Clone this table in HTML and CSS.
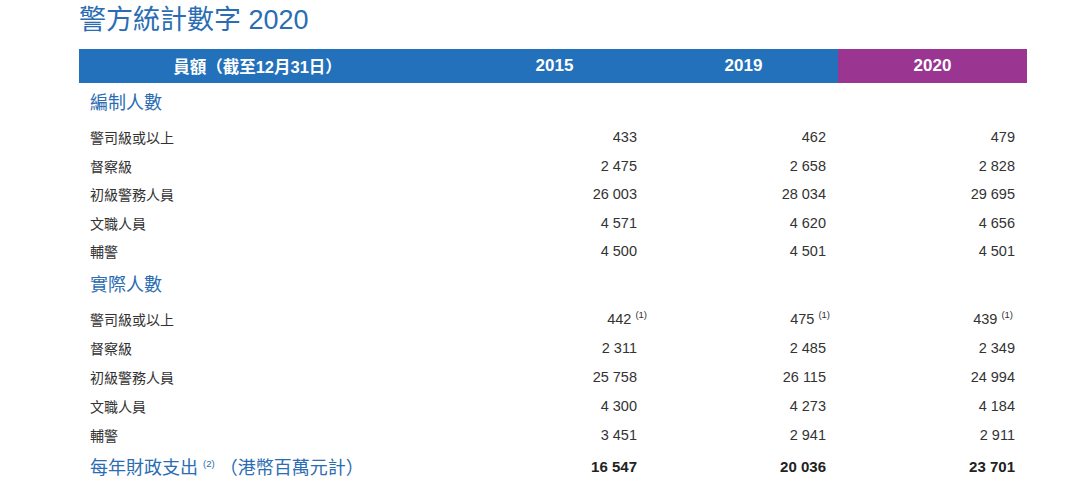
FILE: index.html
```html
<!DOCTYPE html>
<html lang="zh-Hant">
<head>
<meta charset="utf-8">
<title>警方統計數字 2020</title>
<link rel="stylesheet" href="styles.css">
</head>
<body>
<main class="page">
  <h1 class="title">警方統計數字 2020</h1>
  <div class="table">
    <div class="head">
      <div class="hcell hfirst">員額（截至12月31日）</div>
      <div class="hcell">2015</div>
      <div class="hcell">2019</div>
      <div class="hcell hl">2020</div>
    </div>

    <div class="section">編制人數</div>
    <div class="row"><div class="lab">警司級或以上</div><div class="num">433</div><div class="num">462</div><div class="num">479</div></div>
    <div class="row"><div class="lab">督察級</div><div class="num">2 475</div><div class="num">2 658</div><div class="num">2 828</div></div>
    <div class="row"><div class="lab">初級警務人員</div><div class="num">26 003</div><div class="num">28 034</div><div class="num">29 695</div></div>
    <div class="row"><div class="lab">文職人員</div><div class="num">4 571</div><div class="num">4 620</div><div class="num">4 656</div></div>
    <div class="row"><div class="lab">輔警</div><div class="num">4 500</div><div class="num">4 501</div><div class="num">4 501</div></div>

    <div class="section s2">實際人數</div>
    <div class="row r2"><div class="lab">警司級或以上</div><div class="num n1">442 <sup>(1)</sup></div><div class="num n2">475 <sup>(1)</sup></div><div class="num n3">439 <sup>(1)</sup></div></div>
    <div class="row r2"><div class="lab">督察級</div><div class="num">2 311</div><div class="num">2 485</div><div class="num">2 349</div></div>
    <div class="row r2"><div class="lab">初級警務人員</div><div class="num">25 758</div><div class="num">26 115</div><div class="num">24 994</div></div>
    <div class="row r2"><div class="lab">文職人員</div><div class="num">4 300</div><div class="num">4 273</div><div class="num">4 184</div></div>
    <div class="row r2"><div class="lab">輔警</div><div class="num">3 451</div><div class="num">2 941</div><div class="num">2 911</div></div>

    <div class="row total">
      <div class="lab tlab">每年財政支出 <sup>(2)</sup> （港幣百萬元計）</div>
      <div class="num">16 547</div><div class="num">20 036</div><div class="num">23 701</div>
    </div>
  </div>
</main>
</body>
</html>
```

FILE: styles.css
```css
html, body {
  margin: 0;
  padding: 0;
  background: #ffffff;
}
body {
  font-family: "Liberation Sans", "Noto Sans CJK TC", sans-serif;
  color: #333333;
}
.page {
  padding-left: 79px;
  width: 948px;
}
.title {
  margin: 0 0 9px 0;
  height: 40px;
  line-height: 40px;
  font-size: 27px;
  font-weight: 400;
  color: #2b6db3;
  white-space: nowrap;
}
.table {
  width: 948px;
}
.head {
  display: grid;
  grid-template-columns: 381px 189px 189px 189px;
  height: 34px;
  background: #2371ba;
}
.hcell {
  display: flex;
  align-items: center;
  justify-content: center;
  color: #ffffff;
  font-weight: 700;
  font-size: 17px;
}
.hcell.hfirst {
  font-size: 16.5px;
  padding-right: 24px;
}
.hcell.hl {
  background: #9a3592;
}
.section {
  height: 40px;
  line-height: 40px;
  padding-left: 11px;
  font-size: 18px;
  color: #2b6db3;
}
.section.s2 {
  height: 39px;
  line-height: 39px;
}
.row {
  display: grid;
  grid-template-columns: 381px 189px 189px 189px;
  height: 28.5px;
  align-items: center;
  font-size: 14px;
}
.row.r2 {
  height: 29px;
}
.lab {
  padding-left: 11px;
  white-space: nowrap;
}
.num {
  text-align: right;
  padding-right: 12px;
  white-space: nowrap;
  font-size: 14.5px;
}
.num sup {
  font-size: 9.5px;
  vertical-align: 6px;
  line-height: 0;
}
.num.n1 { padding-right: 2px; }
.num.n2 { padding-right: 8px; }
.num.n3 { padding-right: 14px; }
.total {
  height: 33px;
}
.tlab {
  font-size: 18px;
  color: #2b6db3;
}
.tlab sup {
  font-size: 9.5px;
  vertical-align: 7px;
  line-height: 0;
}
.total .num {
  font-weight: 700;
  font-size: 15px;
  color: #222222;
}
```
